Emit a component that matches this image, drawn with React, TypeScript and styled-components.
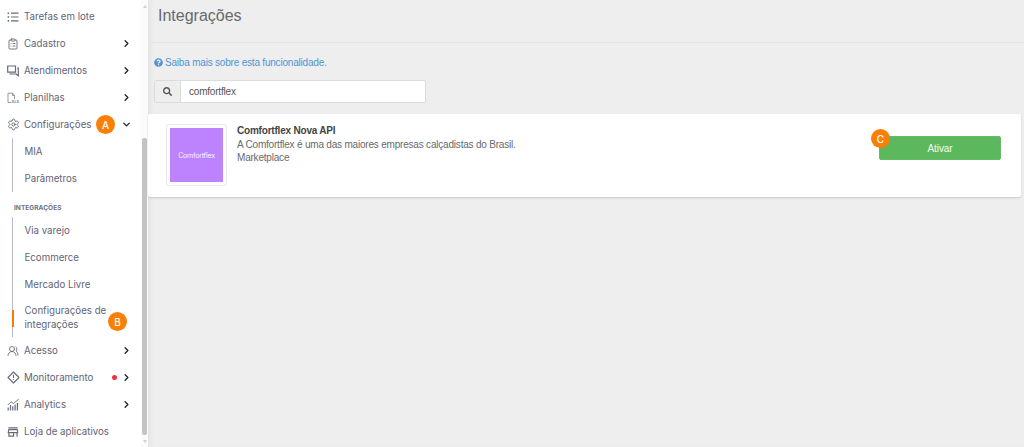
import React from "react";
import styled, { createGlobalStyle } from "styled-components";
import { ChevronRight, ChevronDown, ClipboardList, Settings, UsersRound } from "lucide-react";
import { FaSearch, FaQuestionCircle } from "react-icons/fa";
import { MdOutlineStore } from "react-icons/md";

const Global = createGlobalStyle`
  html, body { margin: 0; padding: 0; height: 100%; overflow: hidden; }
  #root { height: 447px; }
  * { box-sizing: border-box; }
`;
const Page = styled.div`
  display: flex; width: 1024px; height: 447px; overflow: hidden; background: #eeeeee;
  font-family: "Liberation Sans", Arial, sans-serif;
`;
const Sidebar = styled.nav`
  position: relative; flex: 0 0 148px; height: 447px; background: #fff; overflow: hidden; padding-top: 3px;
  font-family: Inter, sans-serif; font-size: 9.7px; color: #5f6476;
`;
const Track = styled.div`
  position: absolute; right: 0; top: 0; bottom: 0; width: 7px; background: #fbfbfb;
  &::after { content: ""; position: absolute; left: 1px; right: 1px; top: 138px; height: 297px; border-radius: 2px; background: #c4c4c4; }
`;
const ArrowUp = styled.span`
  position: absolute; left: 1.5px; top: 5px; border: 2px solid transparent; border-top: 0; border-bottom: 3px solid #d0d0d0;
`;
const ArrowDown = styled.span`
  position: absolute; left: 1.5px; bottom: 4px; border: 2px solid transparent; border-bottom: 0; border-top: 3px solid #d0d0d0;
`;
const Row = styled.div`
  display: flex; align-items: center; height: 27px; padding-left: 7px; position: relative;
`;
const IconSlot = styled.span`
  flex: 0 0 17px; display: flex; align-items: center; color: #666b78;
`;
const Label = styled.span` white-space: nowrap; `;
const Chev = styled.span`
  position: absolute; left: 121px; top: 8px; display: flex; color: #23262e;
`;
const Group = styled.div`
  margin-left: 12px; border-left: 1px solid #b9bad6; padding-left: 11.5px; position: relative;
`;
const SubRow = styled.div`
  display: flex; align-items: center; height: 27px; white-space: nowrap;
`;
const SubRowTall = styled.div`
  line-height: 14px; height: 39px; padding-top: 6px;
`;
const Marker = styled.span`
  position: absolute; left: -1px; bottom: 10px; width: 2px; height: 17px; background: #f57c00;
`;
const Section = styled.div`
  height: 25px; padding: 12px 0 0 14px; font-size: 6.6px; font-weight: 700; color: #6f7383;
`;
const Badge = styled.span`
  position: absolute; width: 19px; height: 19px; border-radius: 50%; background: #f97f06; color: #fff;
  display: flex; align-items: center; justify-content: center; font-family: Inter, sans-serif; font-size: 10px; font-weight: 500;
`;
const Dot = styled.span`
  position: absolute; left: 112px; top: 11px; width: 5px; height: 5px; border-radius: 50%; background: #f0303c;
`;
const Main = styled.main`
  flex: 1; display: flex; flex-direction: column; min-width: 0;
  box-shadow: inset 5px 0 5px -3px rgba(0,0,0,0.05);
`;
const Header = styled.header`
  height: 43px; padding: 5px 0 0 10px; border-bottom: 1px solid #e4e4e4;
`;
const Title = styled.h1`
  margin: 0; font-size: 16px; font-weight: 400; color: #676a6c; line-height: 22px; font-family: "Liberation Sans", Arial, sans-serif;
`;
const Help = styled.a`
  display: flex; align-items: center; gap: 2px; margin: 13px 0 0 6px; height: 13px; font-size: 10px; letter-spacing: -0.2px; color: #4f94d4;
`;
const SearchBar = styled.div`
  display: flex; width: 272px; height: 23px; margin: 11px 0 0 6px; border: 1px solid #dcdcdc; border-radius: 2px; background: #fff;
`;
const SearchAddon = styled.span`
  width: 26px; display: flex; align-items: center; justify-content: center; background: #eeeeee; border-right: 1px solid #dcdcdc; color: #555;
`;
const SearchValue = styled.span`
  padding-left: 8px; line-height: 21px; font-size: 10px; letter-spacing: -0.2px; color: #555;
`;
const Card = styled.section`
  display: flex; position: relative; height: 83px; margin: 11px 3px 0 0; padding: 10px 0 0 18px; background: #fff;
  border-radius: 2px; box-shadow: 0 1px 2px rgba(0,0,0,0.16);
`;
const Logo = styled.div`
  width: 61px; height: 62px; padding: 3px; background: #fff; border: 1px solid #e8e8e8; border-radius: 3px;
`;
const LogoFill = styled.div`
  width: 100%; height: 100%; background: #bd83ff; display: flex; align-items: center; justify-content: center;
  color: #fbf5ff; font-family: Inter, sans-serif; font-size: 7px; letter-spacing: -0.2px;
`;
const Info = styled.div`
  margin-left: 10px; font-size: 10px; letter-spacing: -0.2px; line-height: 13.5px; color: #676a6c;
`;
const Name = styled.div` font-weight: 700; color: #444; `;
const ActionButton = styled.button`
  position: absolute; left: 731px; top: 22px; width: 122px; height: 24px; border: 1px solid #63ba67; border-radius: 2px;
  background: #5cb85c; color: #f4fff4; font-family: "Liberation Sans", Arial, sans-serif; font-size: 10px; letter-spacing: -0.1px; padding: 0;
`;

const ListIcon = () => (
  <svg width="12" height="12" viewBox="0 0 12 12" fill="none" stroke="#666b78" strokeWidth="1.2">
    <path d="M4 2.2H11.5M4 6H11.5M4 9.8H11.5" />
    <path d="M0.6 2.2H2.2M0.6 6H2.2M0.6 9.8H2.2" strokeWidth="1.6" />
  </svg>
);
const Xls = () => (
  <svg width="12" height="12" viewBox="0 0 12 12" fill="none" stroke="#7a7f8a" strokeWidth="0.8">
    <path d="M7.5 7V3.5L5.5 1.2H1V10.5H4" />
    <path d="M5.5 1.2V3.5H7.5" />
    <text x="4.6" y="10.8" fontSize="3.8" fontWeight="700" fill="#7a7f8a" stroke="none" fontFamily="Inter, sans-serif">XLS</text>
  </svg>
);
const Chat = () => (
  <svg width="12" height="12" viewBox="0 0 12 12" fill="none" stroke="#666b78" strokeWidth="1.2">
    <path d="M0.7 1H8.5V7.2H0.7Z" />
    <path d="M10.2 3.2H11.3V10.8L9.2 9H3.2V8.2" />
  </svg>
);
const DiamondAlert = () => (
  <svg width="13" height="13" viewBox="0 0 13 13" fill="none" stroke="#666b78" strokeWidth="1.1">
    <path d="M6.5 1 12 6.5 6.5 12 1 6.5Z" strokeLinejoin="round" />
    <path d="M6.5 3.8V7M6.5 8.2V9" />
  </svg>
);
const Chart = () => (
  <svg width="13" height="13" viewBox="0 0 13 13" fill="none" stroke="#666b78" strokeWidth="0.9">
    <path d="M0.8 7 4 3.8 6.5 5.5 11.8 1" />
    <path d="M1.2 12.5V9.5M3.5 12.5V7M5.8 12.5V8.2M8.1 12.5V6.5M10.4 12.5V5" strokeWidth="1.2" />
  </svg>
);

const Item = ({ icon, label, chevron = "right", children }: { icon: React.ReactNode; label: string; chevron?: "right" | "down" | "none"; children?: React.ReactNode }) => (
  <Row>
    <IconSlot>{icon}</IconSlot>
    <Label>{label}</Label>
    {chevron !== "none" && <Chev>{chevron === "right" ? <ChevronRight size={11} strokeWidth={3} /> : <ChevronDown size={11} strokeWidth={3} />}</Chev>}
    {children}
  </Row>
);

export default function App() {
  return (
    <Page>
      <Global />
      <Sidebar>
        <Item icon={<ListIcon />} label="Tarefas em lote" chevron="none" />
        <Item icon={<ClipboardList size={12} strokeWidth={1.8} />} label="Cadastro" />
        <Item icon={<Chat />} label="Atendimentos" />
        <Item icon={<Xls />} label="Planilhas" />
        <Item icon={<Settings size={13} strokeWidth={1.8} />} label="Configurações" chevron="down">
          <Badge style={{ left: 96, top: 4 }}>A</Badge>
        </Item>
        <Group>
          <SubRow>MIA</SubRow>
          <SubRow>Parâmetros</SubRow>
        </Group>
        <Section>INTEGRAÇÕES</Section>
        <Group>
          <SubRow>Via varejo</SubRow>
          <SubRow>Ecommerce</SubRow>
          <SubRow>Mercado Livre</SubRow>
          <SubRowTall>
            Configurações de<br />integrações
            <Marker />
            <Badge style={{ left: 95, bottom: 6 }}>B</Badge>
          </SubRowTall>
        </Group>
        <Item icon={<UsersRound size={12} strokeWidth={1.8} />} label="Acesso" />
        <Item icon={<DiamondAlert />} label="Monitoramento"><Dot /></Item>
        <Item icon={<Chart />} label="Analytics" />
        <Item icon={<MdOutlineStore size={14} style={{ marginLeft: -1 }} />} label="Loja de aplicativos" chevron="none" />
        <Track><ArrowUp /><ArrowDown /></Track>
      </Sidebar>
      <Main>
        <Header><Title>Integrações</Title></Header>
        <Help><FaQuestionCircle size={9} />Saiba mais sobre esta funcionalidade.</Help>
        <SearchBar>
          <SearchAddon><FaSearch size={9} /></SearchAddon>
          <SearchValue>comfortflex</SearchValue>
        </SearchBar>
        <Card>
          <Logo><LogoFill>Comfortflex</LogoFill></Logo>
          <Info>
            <Name>Comfortflex Nova API</Name>
            <div>A Comfortflex é uma das maiores empresas calçadistas do Brasil.</div>
            <div>Marketplace</div>
          </Info>
          <ActionButton>Ativar</ActionButton>
          <Badge style={{ left: 723, top: 15 }}>C</Badge>
        </Card>
      </Main>
    </Page>
  );
}
